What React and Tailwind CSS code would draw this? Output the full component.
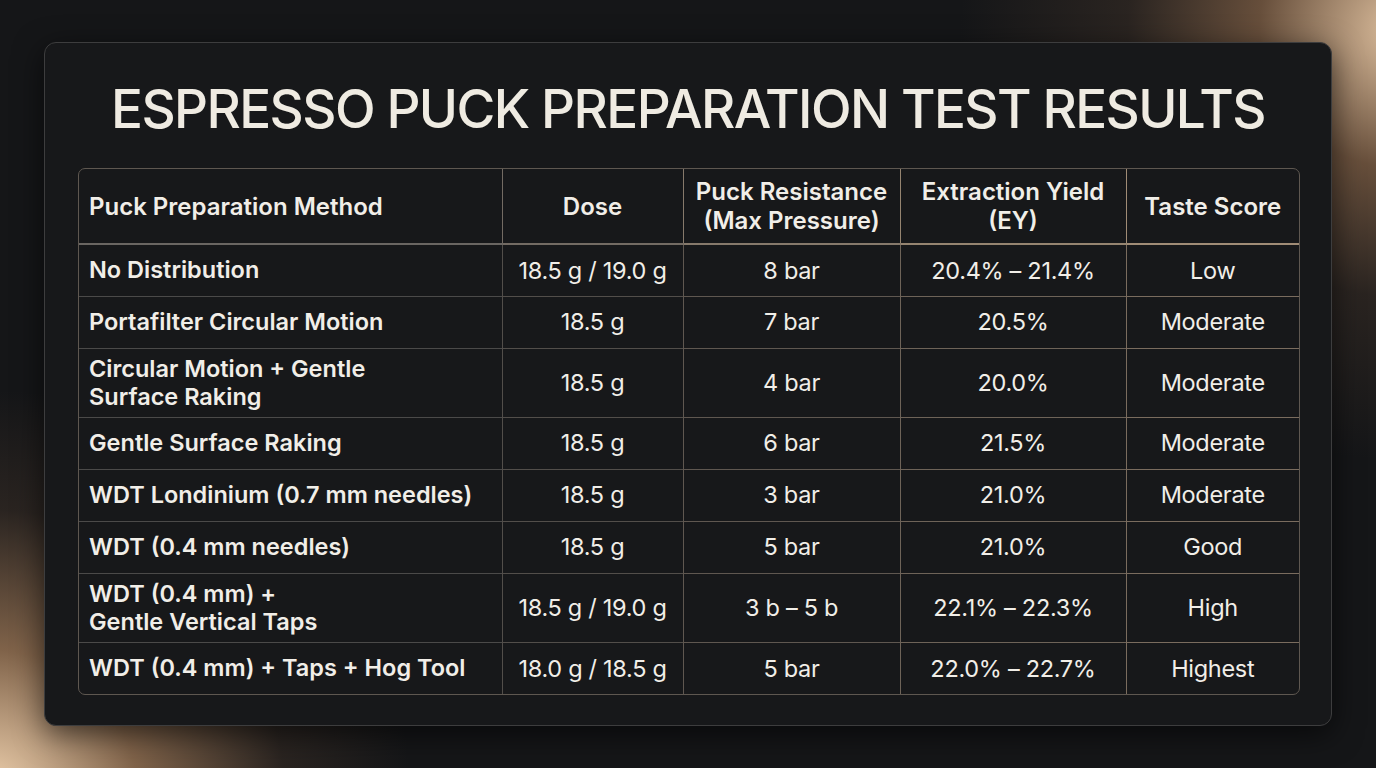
const rows = [
  ['No Distribution', '18.5 g / 19.0 g', '8 bar', '20.4% – 21.4%', 'Low'],
  ['Portafilter Circular Motion', '18.5 g', '7 bar', '20.5%', 'Moderate'],
  [['Circular Motion + Gentle', 'Surface Raking'], '18.5 g', '4 bar', '20.0%', 'Moderate'],
  ['Gentle Surface Raking', '18.5 g', '6 bar', '21.5%', 'Moderate'],
  ['WDT Londinium (0.7 mm needles)', '18.5 g', '3 bar', '21.0%', 'Moderate'],
  ['WDT (0.4 mm needles)', '18.5 g', '5 bar', '21.0%', 'Good'],
  [['WDT (0.4 mm) +', 'Gentle Vertical Taps'], '18.5 g / 19.0 g', '3 b – 5 b', '22.1% – 22.3%', 'High'],
  ['WDT (0.4 mm) + Taps + Hog Tool', '18.0 g / 18.5 g', '5 bar', '22.0% – 22.7%', 'Highest'],
]

// line colours drift from grey on the left to tan on the right
const lines = ['border-[#4b4a49]', 'border-[#524e4a]', 'border-[#5f5750]', 'border-[#6e6358]', 'border-[#7a6c5e]']
const heads = ['border-[#6a6662]', 'border-[#736b63]', 'border-[#86796b]', 'border-[#958470]', 'border-[#a08c76]']

export default function App() {
  return (
    <div
      className="w-[1376px] h-[768px] overflow-hidden pt-[42px] pl-[44px] font-['Inter',sans-serif] text-[#f1eee8]"
      style={{
        background:
          'radial-gradient(ellipse 440px 430px at 1400px 30px, rgba(232,200,165,0.95), rgba(170,125,88,0.55) 32%, rgba(90,68,52,0.3) 62%, transparent 100%), radial-gradient(ellipse 420px 400px at -10px 790px, rgba(240,210,175,1), rgba(185,140,100,0.65) 35%, rgba(90,68,52,0.3) 70%, transparent 100%), #151618',
      }}
    >
      <div className="w-[1288px] h-[684px] rounded-[12px] border border-[#3d3d3e] bg-[#17181a] shadow-[0_8px_30px_rgba(0,0,0,0.6)] px-[33px]">
        <h1 className="pt-[37px] h-[125px] text-center text-[53px] leading-[58px] font-medium tracking-[-1.6px] text-[#efebe2]">
          ESPRESSO PUCK PREPARATION TEST RESULTS
        </h1>
        <div className="w-[1222px] rounded-[7px] border border-[#5e5750] overflow-hidden">
          <table className="w-full border-collapse table-fixed text-[24px]">
            <thead>
              <tr className="h-[75px] leading-[29px]">
                <th className={`w-[423px] text-left pl-[10px] font-semibold border-b-2 ${heads[0]}`}>Puck Preparation Method</th>
                <th className={`w-[181px] font-semibold border-l border-b-2 ${lines[1]} ${heads[1]}`}>Dose</th>
                <th className={`w-[217px] font-semibold border-l border-b-2 ${lines[2]} ${heads[2]}`}>Puck Resistance<br />(Max Pressure)</th>
                <th className={`w-[226px] font-semibold border-l border-b-2 ${lines[3]} ${heads[3]}`}>Extraction Yield<br />(EY)</th>
                <th className={`w-[173px] font-semibold border-l border-b-2 ${lines[4]} ${heads[4]}`}>Taste Score</th>
              </tr>
            </thead>
            <tbody>
              {rows.map((r, i) => {
                const double = Array.isArray(r[0])
                const top = i > 0 ? 'border-t' : ''
                return (
                  <tr key={i} className={double ? 'h-[69px]' : 'h-[52px]'}>
                    <td className={`pl-[10px] text-[23.5px] font-semibold leading-[28px] ${top} ${lines[0]}`}>
                      {double ? (
                        <>
                          {r[0][0]}
                          <br />
                          {r[0][1]}
                        </>
                      ) : (
                        r[0]
                      )}
                    </td>
                    {r.slice(1).map((c, j) => (
                      <td key={j} className={`text-center text-[23.5px] tracking-[-0.3px] border-l ${top} ${lines[j + 1]}`}>
                        {c}
                      </td>
                    ))}
                  </tr>
                )
              })}
            </tbody>
          </table>
        </div>
      </div>
    </div>
  )
}
